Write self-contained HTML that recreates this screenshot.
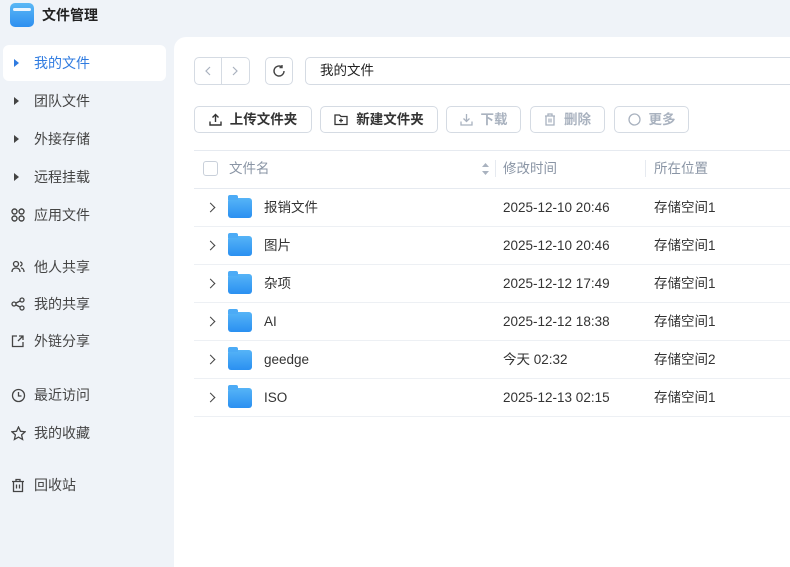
<!DOCTYPE html>
<html><head><meta charset="utf-8"><style>
*{margin:0;padding:0;box-sizing:border-box}
body{width:790px;height:561px;overflow:hidden;background:#eff3f8;font-family:"Liberation Sans","Noto Sans CJK SC",sans-serif;font-size:14px;color:#333;position:relative}
.abs{position:absolute}
.logo{left:10px;top:3px;width:24px;height:24px;border-radius:5px;background:linear-gradient(#5bb8f5,#2d8ff0)}
.logo:before{content:"";position:absolute;left:3px;top:5px;width:18px;height:3px;background:#eaf5ff;border-radius:2px}
.title{left:42px;top:5px;line-height:20px;font-size:14px;font-weight:bold;color:#222}
.nav{left:0;width:180px;height:36px;display:flex;align-items:center;font-size:14px;color:#444;line-height:36px}
.nav .ic{width:34px;display:flex;justify-content:center;padding-left:2px}
.active{left:3px;top:45px;width:163px;height:36px;background:#fff;border-radius:6px}
.tri{width:0;height:0;border-left:5px solid #444;border-top:4.5px solid transparent;border-bottom:4.5px solid transparent;margin-left:-3px}
.main{left:174px;top:37px;width:620px;height:530px;background:#fff;border-top-left-radius:12px}
.bx{border:1px solid #d5dbe3;border-radius:5px;background:#fff}
.btn{top:106px;height:27px;display:flex;align-items:center;justify-content:center;gap:8px;font-weight:bold;font-size:13.5px;line-height:25px}
.dis{color:#a9b2bf}
.row{left:194px;width:600px;height:38px;border-bottom:1px solid #edf0f4;font-size:13.5px}
.row span{position:absolute;top:0;line-height:37px;height:37px}
.fold{position:absolute;left:34px;top:9px;width:24px;height:20px;border-radius:3px;background:linear-gradient(#56b4f7,#2a90f1)}
.fold:before{content:"";position:absolute;left:0;top:-3px;width:10px;height:5px;background:#4cabf6;border-radius:2px 2px 0 0}
.chev{position:absolute;left:13px;top:15px;width:7px;height:7px;border-right:1.5px solid #444;border-top:1.5px solid #444;transform:rotate(45deg)}
.hd{top:150px;line-height:38px;color:#8a95a5;font-size:13.5px}
</style></head><body>
<div class="abs logo"></div><div class="abs title">文件管理</div>
<div class="abs active"></div>
<div class="abs nav" style="top:45px;color:#2f7be0"><div class="ic"><div class="tri" style="border-left-color:#2f7be0"></div></div>我的文件</div>
<div class="abs nav" style="top:83px"><div class="ic"><div class="tri"></div></div>团队文件</div>
<div class="abs nav" style="top:121px"><div class="ic"><div class="tri"></div></div>外接存储</div>
<div class="abs nav" style="top:159px"><div class="ic"><div class="tri"></div></div>远程挂载</div>
<div class="abs nav" style="top:197px"><div class="ic"><svg width="14" height="14" fill="none" stroke="#444" stroke-width="1.4"><circle cx="3.5" cy="3.5" r="2.5"/><circle cx="10.5" cy="3.5" r="2.5"/><circle cx="3.5" cy="10.5" r="2.5"/><circle cx="10.5" cy="10.5" r="2.5"/></svg></div>应用文件</div>
<div class="abs nav" style="top:249px"><div class="ic"><svg width="14" height="14" fill="none" stroke="#444" stroke-width="1.3"><circle cx="5" cy="4" r="2.5"/><path d="M1 12c0-3 2-4 4-4s4 1 4 4M9 2a2 2 0 010 4M10 8c2 0 3 2 3 4"/></svg></div>他人共享</div>
<div class="abs nav" style="top:286px"><div class="ic"><svg width="14" height="14" fill="none" stroke="#444" stroke-width="1.3"><circle cx="3" cy="7" r="2"/><circle cx="11" cy="3" r="2"/><circle cx="11" cy="11" r="2"/><path d="M5 6l4-2M5 8l4 2"/></svg></div>我的共享</div>
<div class="abs nav" style="top:323px"><div class="ic"><svg width="14" height="14" fill="none" stroke="#444" stroke-width="1.3"><path d="M6 2H1.5v10.5H12V8M8 2h4v4M12 2L7 7"/></svg></div>外链分享</div>
<div class="abs nav" style="top:377px"><div class="ic"><svg width="15" height="15" fill="none" stroke="#444" stroke-width="1.3"><circle cx="7.5" cy="7.5" r="6"/><path d="M7.5 4v4h3"/></svg></div>最近访问</div>
<div class="abs nav" style="top:415px"><div class="ic"><svg width="15" height="15" fill="none" stroke="#444" stroke-width="1.3"><path d="M7.5 1l2 4.3 4.6.5-3.5 3.1 1 4.6-4.1-2.4-4.1 2.4 1-4.6L.9 5.8l4.6-.5z"/></svg></div>我的收藏</div>
<div class="abs nav" style="top:467px"><div class="ic"><svg width="14" height="15" fill="none" stroke="#444" stroke-width="1.3"><path d="M1 3.5h12M5 3.5V1.5h4v2M2.5 3.5v10h9v-10M5.5 6.5v4M8.5 6.5v4"/></svg></div>回收站</div>

<div class="abs main"></div>
<div class="abs bx" style="left:194px;top:57px;width:56px;height:28px"></div>
<div class="abs" style="left:221px;top:58px;width:1px;height:26px;background:#d5dbe3"></div>
<svg class="abs" style="left:204px;top:66px" width="8" height="10" fill="none" stroke="#a9b2bf" stroke-width="1.2"><path d="M6 1L2 5l4 4"/></svg>
<svg class="abs" style="left:231px;top:66px" width="8" height="10" fill="none" stroke="#a9b2bf" stroke-width="1.2"><path d="M2 1l4 4-4 4"/></svg>
<div class="abs bx" style="left:265px;top:57px;width:28px;height:28px"></div>
<svg class="abs" style="left:272px;top:64px" width="14" height="14" fill="none" stroke="#444" stroke-width="1.4"><path d="M12 7A5 5 0 1 1 10 3M10 1v2.5H7.5"/></svg>
<div class="abs bx" style="left:305px;top:57px;width:500px;height:28px"></div>
<div class="abs" style="left:320px;top:57px;line-height:28px;font-size:13.5px;color:#222">我的文件</div>

<div class="abs bx btn" style="left:194px;width:118px"><svg width="13" height="13" fill="none" stroke="#333" stroke-width="1.4"><path d="M6.5 9V1.5M3.5 4.5l3-3 3 3M1 8.5v3.5h11V8.5"/></svg>上传文件夹</div>
<div class="abs bx btn" style="left:320px;width:118px"><svg width="14" height="13" fill="none" stroke="#333" stroke-width="1.3"><path d="M1 2h4.5l1.5 1.5h6v8H1z M7 5.5v4M5 7.5h4"/></svg>新建文件夹</div>
<div class="abs bx btn dis" style="left:446px;width:75px"><svg width="13" height="13" fill="none" stroke="#a9b2bf" stroke-width="1.3"><path d="M6.5 1v7.5M3.5 5.5l3 3 3-3M1 8.5v3.5h11V8.5"/></svg>下载</div>
<div class="abs bx btn dis" style="left:530px;width:75px"><svg width="12" height="13" fill="none" stroke="#a9b2bf" stroke-width="1.3"><path d="M1 3h10M4 3V1h4v2M2 3v9h8V3M5 5.5v4M7 5.5v4"/></svg>删除</div>
<div class="abs bx btn dis" style="left:614px;width:75px"><svg width="13" height="13" fill="none" stroke="#a9b2bf" stroke-width="1.3"><circle cx="6.5" cy="6.5" r="5.5"/></svg>更多</div>

<div class="abs" style="left:194px;top:150px;width:600px;height:1px;background:#e6eaf0"></div>
<div class="abs" style="left:194px;top:188px;width:600px;height:1px;background:#e6eaf0"></div>
<div class="abs" style="left:203px;top:161px;width:15px;height:15px;border:1px solid #c9d0da;border-radius:3px"></div>
<div class="abs hd" style="left:229px">文件名</div>
<svg class="abs" style="left:481px;top:162px" width="9" height="14"><path d="M1 5l3.5-4 3.5 4z M1 9l3.5 4 3.5-4z" fill="#a9b2bf"/></svg>
<div class="abs" style="left:495px;top:160px;width:1px;height:17px;background:#e6eaf0"></div>
<div class="abs hd" style="left:503px">修改时间</div>
<div class="abs" style="left:645px;top:160px;width:1px;height:17px;background:#e6eaf0"></div>
<div class="abs hd" style="left:654px">所在位置</div>

<div class="abs row" style="top:189px"><i class="chev"></i><i class="fold"></i><span style="left:70px">报销文件</span><span style="left:309px">2025-12-10 20:46</span><span style="left:460px">存储空间1</span></div>
<div class="abs row" style="top:227px"><i class="chev"></i><i class="fold"></i><span style="left:70px">图片</span><span style="left:309px">2025-12-10 20:46</span><span style="left:460px">存储空间1</span></div>
<div class="abs row" style="top:265px"><i class="chev"></i><i class="fold"></i><span style="left:70px">杂项</span><span style="left:309px">2025-12-12 17:49</span><span style="left:460px">存储空间1</span></div>
<div class="abs row" style="top:303px"><i class="chev"></i><i class="fold"></i><span style="left:70px">AI</span><span style="left:309px">2025-12-12 18:38</span><span style="left:460px">存储空间1</span></div>
<div class="abs row" style="top:341px"><i class="chev"></i><i class="fold"></i><span style="left:70px">geedge</span><span style="left:309px">今天 02:32</span><span style="left:460px">存储空间2</span></div>
<div class="abs row" style="top:379px"><i class="chev"></i><i class="fold"></i><span style="left:70px">ISO</span><span style="left:309px">2025-12-13 02:15</span><span style="left:460px">存储空间1</span></div>
</body></html>
